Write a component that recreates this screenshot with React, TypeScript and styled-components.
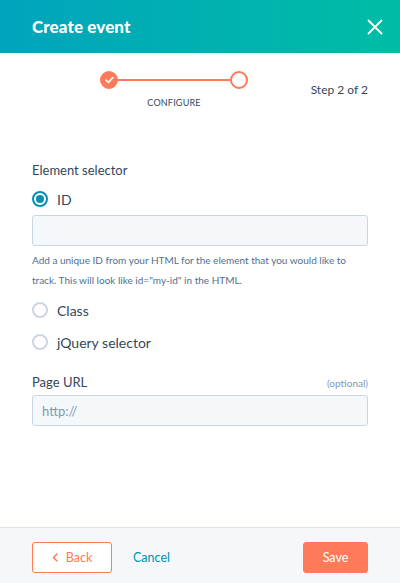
import React from 'react';
import styled, { createGlobalStyle } from 'styled-components';

const Global = createGlobalStyle`
  html, body { margin: 0; padding: 0; background: #fff; }
  body { font-family: Lato, "Open Sans", sans-serif; color: #33475b; }
  * { box-sizing: border-box; }
`;

const Panel = styled.div`
  width: 400px;
  height: 583px;
  display: flex;
  flex-direction: column;
  background: #fff;
`;

const Header = styled.div`
  height: 53px;
  flex-shrink: 0;
  display: flex;
  align-items: center;
  justify-content: space-between;
  padding: 0 17px 0 32px;
  background: linear-gradient(90deg, #00a4bd 0%, #00bda5 100%);
`;

const Title = styled.h1`
  margin: 0;
  font-size: 17px;
  font-weight: 900;
  color: #fff;
  letter-spacing: 0.1px;
`;

const CloseButton = styled.button`
  border: 0;
  background: none;
  padding: 0;
  width: 16px;
  height: 16px;
  display: flex;
  cursor: pointer;
`;

const Body = styled.div`
  flex: 1;
  padding: 0 32px;
`;

const StepRow = styled.div`
  display: flex;
  align-items: flex-start;
  padding-top: 18px;
  height: 108px;
`;

const Steps = styled.div`
  margin-left: 68px;
  width: 148px;
  display: flex;
  flex-direction: column;
  align-items: center;
`;

const Track = styled.div`
  width: 100%;
  height: 18px;
  display: flex;
  align-items: center;
`;

const Dot = styled.div<{ $done?: boolean }>`
  width: 18px;
  height: 18px;
  flex-shrink: 0;
  border-radius: 50%;
  border: 2px solid #ff7a59;
  background: ${p => (p.$done ? '#ff7a59' : '#fff')};
  display: flex;
  align-items: center;
  justify-content: center;
`;

const Line = styled.div`
  flex: 1;
  height: 2px;
  background: #ff7a59;
`;

const StepLabel = styled.div`
  margin-top: 8px;
  font-size: 9px;
  letter-spacing: 0.2px;
  color: #33475b;
`;

const StepCount = styled.div`
  margin-left: auto;
  margin-top: 11px;
  font-size: 12px;
  color: #33475b;
`;

const FieldLabel = styled.div<{ $gap: number }>`
  display: flex;
  justify-content: space-between;
  align-items: baseline;
  margin-bottom: ${p => p.$gap}px;
  font-size: 13px;
  line-height: 18px;
  color: #33475b;
`;

const Optional = styled.span`
  font-size: 10px;
  color: #7c98b6;
`;

const RadioGroup = styled.div<{ $top: number }>`
  margin-top: ${p => p.$top}px;
`;

const RadioRow = styled.label`
  display: flex;
  align-items: center;
  gap: 9px;
  height: 32px;
  font-size: 14px;
  color: #33475b;
  cursor: pointer;
`;

const RadioRing = styled.span<{ $checked?: boolean }>`
  width: 16px;
  height: 16px;
  border-radius: 50%;
  border: 2px solid ${p => (p.$checked ? '#0091ae' : '#cbd6e2')};
  display: flex;
  align-items: center;
  justify-content: center;
  background: #fff;
  &::after {
    content: '';
    width: 8px;
    height: 8px;
    border-radius: 50%;
    background: ${p => (p.$checked ? '#0091ae' : 'transparent')};
  }
`;

const TextInput = styled.input`
  display: block;
  width: 100%;
  height: 31px;
  border: 1px solid #cbd6e2;
  border-radius: 3px;
  background: #f5f8fa;
  padding: 0 9px;
  font-family: inherit;
  font-size: 13px;
  color: #33475b;
  outline: none;
  &::placeholder { color: #7c98b6; }
`;

const Help = styled.p`
  margin: 4px 0 0;
  font-size: 10px;
  line-height: 20px;
  color: #516f90;
`;

const UrlField = styled.div`
  margin-top: 15px;
`;

const Footer = styled.div`
  height: 56px;
  flex-shrink: 0;
  border-top: 1px solid #dfe3eb;
  background: #f5f8fa;
  display: flex;
  align-items: flex-start;
  padding: 14px 32px 0;
`;

const Button = styled.button<{ $variant: 'secondary' | 'primary' }>`
  height: 31px;
  border-radius: 3px;
  font-family: inherit;
  font-size: 12.5px;
  display: flex;
  align-items: center;
  justify-content: center;
  gap: 8px;
  cursor: pointer;
  ${p =>
    p.$variant === 'primary'
      ? `background:#ff7a59;border:1px solid #ff7a59;color:#fff;width:65px;margin-left:auto;`
      : `background:#fff;border:1px solid #ff7a59;color:#ff7a59;width:80px;`}
`;

const LinkButton = styled.button`
  border: 0;
  background: none;
  height: 31px;
  margin-left: 21px;
  padding: 0;
  font-family: inherit;
  font-size: 12.5px;
  color: #0091ae;
  cursor: pointer;
`;

export default function App() {
  return (
    <Panel>
      <Global />
      <Header>
        <Title>Create event</Title>
        <CloseButton aria-label="Close">
          <svg width="16" height="16" viewBox="0 0 16 16">
            <path d="M1.5 1.5 L14.5 14.5 M14.5 1.5 L1.5 14.5" stroke="#fff" strokeWidth="1.8" strokeLinecap="round" />
          </svg>
        </CloseButton>
      </Header>
      <Body>
        <StepRow>
          <Steps>
            <Track>
              <Dot $done>
                <svg width="9" height="8" viewBox="0 0 9 8">
                  <path d="M1 4.2 L3.4 6.4 L8 1.5" fill="none" stroke="#fff" strokeWidth="1.6" strokeLinecap="round" strokeLinejoin="round" />
                </svg>
              </Dot>
              <Line />
              <Dot />
            </Track>
            <StepLabel>CONFIGURE</StepLabel>
          </Steps>
          <StepCount>Step 2 of 2</StepCount>
        </StepRow>

        <FieldLabel $gap={4}>Element selector</FieldLabel>
        <RadioRow>
          <RadioRing $checked />
          ID
        </RadioRow>
        <TextInput />
        <Help>
          Add a unique ID from your HTML for the element that you would like to track. This will look like id="my-id" in the HTML.
        </Help>
        <RadioGroup $top={4}>
          <RadioRow>
            <RadioRing />
            Class
          </RadioRow>
          <RadioRow>
            <RadioRing />
            jQuery selector
          </RadioRow>
        </RadioGroup>
        <UrlField>
          <FieldLabel $gap={3}>
            Page URL
            <Optional>(optional)</Optional>
          </FieldLabel>
          <TextInput placeholder="http://" />
        </UrlField>
      </Body>
      <Footer>
        <Button $variant="secondary">
          <svg width="6" height="9" viewBox="0 0 6 9">
            <path d="M5 1 L1.5 4.5 L5 8" fill="none" stroke="#ff7a59" strokeWidth="1.5" strokeLinecap="round" strokeLinejoin="round" />
          </svg>
          Back
        </Button>
        <LinkButton>Cancel</LinkButton>
        <Button $variant="primary">Save</Button>
      </Footer>
    </Panel>
  );
}
